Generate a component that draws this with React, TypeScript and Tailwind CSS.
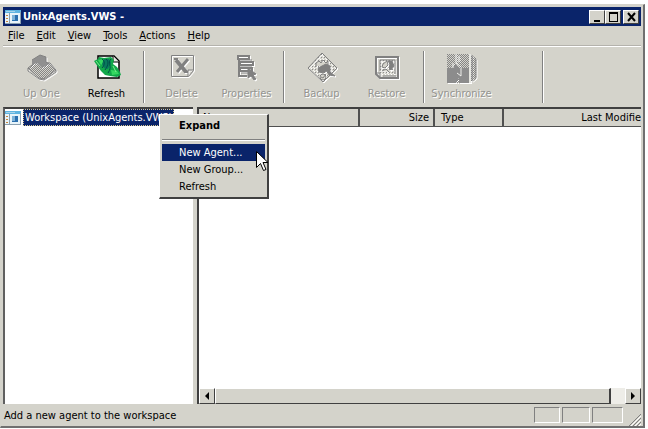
import React from "react";
import clsx from "clsx";

interface ToolButtonProps {
  label: string;
  disabled?: boolean;
  children: React.ReactNode;
}

const menus = ["File", "Edit", "View", "Tools", "Actions", "Help"];

const raised =
  "border border-t-white border-l-white border-r-[#404040] border-b-[#404040] bg-[#d4d3cb]";

const sunken = "border border-t-[#808080] border-r-white border-b-white border-l-[#808080]";

const headerCell = "border-b border-[#505050] pt-px font-normal";

const AppIcon: React.FC = () => (
  <svg className="h-4 w-4 shrink-0" viewBox="0 0 16 16" shapeRendering="crispEdges" aria-hidden="true">
    <path fill="#e8f4fa" d="M0 1h16v14H0z" />
    <path fill="#5fb4e0" d="M0 1h16v3H0z" />
    <path fill="#a9d4ea" d="M1 2h9v1H1z" />
    <path fill="#8aa0b0" d="M4 4h1v11H4zM0 14h16v1H0zM15 3h1v12h-1z" />
    <path fill="#c9873c" d="M1 6h2v1H1zM1 9h2v1H1zM1 12h2v1H1z" />
    <path fill="#2a6fae" d="M7 6h6v6H7z" />
    <path fill="#7fb3d8" d="M7 6h3v5H7z" />
  </svg>
);

const ToolIcon: React.FC<{ children: React.ReactNode }> = ({ children }) => (
  <svg
    className="h-8 w-8 drop-shadow-[1px_1px_0_#ffffff]"
    viewBox="0 0 32 32"
    fill="none"
    stroke="#808080"
    aria-hidden="true"
  >
    {children}
  </svg>
);

const UpOneIcon: React.FC = () => (
  <ToolIcon>
    <path fill="url(#dither)" d="M2 17 10 11 24 12 30 19 18 28 13 27z" />
    <path d="M2 17v3l11 8 5 1 12-8v-2" />
    <path fill="#909090" stroke="none" d="M6 9 14 4 20 6 20 11 23 13 16 17 11 12 6 14z" />
    <path d="M6 9 14 4l6 2v5l3 2" />
  </ToolIcon>
);

const RefreshIcon: React.FC = () => (
  <svg className="h-8 w-8" viewBox="0 0 32 32" aria-hidden="true">
    <path fill="#ffffff" stroke="#000000" strokeWidth="1.500" d="M7 5h16l5 5v17H7z" />
    <path fill="#e8e8e2" stroke="#000000" d="M22 5v6h6" />
    <path fill="#12a84a" d="M3 10 7 8 8 6l5 1 7-1 3 3-1 4 4 3 3 5 1 3-4 2-7-1-5-1-4-4-3-4-2-3z" />
    <path fill="#35d860" d="m7 9 5-1 1 3-3 3zM20 19l6 1 2 3-7 1z" />
    <path fill="#087a5c" d="m13 8 5 0 2 4-3 6-4-1-2-4z" />
    <path stroke="#004c48" fill="none" d="M11 8c3 2 3 6 0 9M20 8c-4 4 2 7-3 14M15 8c4 3 1 8-1 11" />
    <path stroke="#7cf08c" fill="none" d="m5 10 4 5M22 15l3 6" />
  </svg>
);

const DeleteIcon: React.FC = () => (
  <ToolIcon>
    <path d="M5.500 4.500h22v15l-5 6h-17z" />
    <path d="M27 19h-5v6" />
    <path strokeWidth="4" d="m10 9 10 12" />
    <path strokeWidth="3" d="M22 8 11 21" />
    <path strokeWidth="2" d="M8 8h4M18 21h4" />
  </ToolIcon>
);

const PropertiesIcon: React.FC = () => (
  <ToolIcon>
    <path strokeWidth="2" d="M7 5h11v3H7zM8 8v17h8M9 11h13v3H9zM9 17h12v3H9z" />
    <path d="M8 9h13M9 16h12M10 22h7" />
    <path fill="#808080" d="m17 17 8 6-3 1 3 4-2 1-3-4-3 2z" />
  </ToolIcon>
);

const BackupIcon: React.FC = () => (
  <ToolIcon>
    <path fill="url(#dither-light)" d="M16 2 31 17 17 31 2 17z" />
    <path fill="#d4d3cb" stroke="none" d="M10 11h12v4H10z" />
    <path d="M10 16v-4l3-2 2 2 2-3 3 3 2-2v6" />
    <path fill="#808080" d="m12 17 8-4 4 2v6l5 4-6-1-2-4-4 2-4-1z" />
    <circle cx="17" cy="26" r="3" fill="#d4d3cb" />
    <path d="m15 26 2 1 3-4" />
  </ToolIcon>
);

const RestoreIcon: React.FC = () => (
  <ToolIcon>
    <path strokeWidth="2" d="M5 6h22v21H9l-4-4z" />
    <path fill="url(#dither-light)" stroke="none" d="M9 9h15v14H9z" />
    <path d="M9 20V9h15v14" />
    <path fill="#808080" d="M17 10h4l2 5-3 4-2-2 1-4z" />
    <path fill="#d4d3cb" d="m12 13 4-3 1 4-3 3-3-1zM11 20l4-2 3 3" />
    <path d="M5 22h4v4M12 25h13" />
  </ToolIcon>
);

const SynchronizeIcon: React.FC = () => (
  <ToolIcon>
    <path fill="url(#dither)" stroke="none" d="M1 3h23l6 4v21l-6 4H1z" />
    <path fill="#8c8c8c" stroke="none" d="M1 17h5l4-4 3 4h10v15H13v-5l-3 5H1z" />
    <path stroke="#e6e6e0" strokeWidth="2" d="M24 3v29" />
    <path stroke="#f0f0ec" d="M10 3v9l4 3M7 12v5M15 17v8l-4-3M13 5v6" />
    <path d="M26 4v26M30 8v19" />
  </ToolIcon>
);

const ToolButton: React.FC<ToolButtonProps> = ({ label, disabled, children }) => (
  <button
    type="button"
    disabled={disabled}
    className={clsx(
      "flex w-[65px] flex-col items-center gap-[3px] whitespace-nowrap",
      disabled ? "text-[#949490] [text-shadow:1px_1px_0_#ffffff]" : "text-black"
    )}
  >
    {children}
    <span>{label}</span>
  </button>
);

const ToolSeparator: React.FC = () => (
  <div className="mx-1 w-[2px] self-stretch border-l border-r border-l-[#808080] border-r-white" />
);

const TitleBar: React.FC = () => (
  <header className="flex h-[19px] items-center bg-[#0a246a] pr-[2px] pl-[2px] text-white">
    <AppIcon />
    <h1 className="ml-[2px] grow font-bold">UnixAgents.VWS -</h1>
    <button type="button" aria-label="Minimize" className={clsx(raised, "h-[14px] w-4")}>
      <svg viewBox="0 0 14 12" shapeRendering="crispEdges">
        <path fill="#000000" d="M4 9h6v2H4z" />
      </svg>
    </button>
    <button type="button" aria-label="Maximize" className={clsx(raised, "h-[14px] w-4")}>
      <svg viewBox="0 0 14 12" shapeRendering="crispEdges">
        <path fill="#000000" d="M3 1h9v10H3zM4 3v7h7V3z" fillRule="evenodd" />
      </svg>
    </button>
    <button type="button" aria-label="Close" className={clsx(raised, "ml-[2px] h-[14px] w-4")}>
      <svg viewBox="0 0 14 12">
        <path stroke="#000000" strokeWidth="2" d="m4 2 7 8M11 2l-7 8" />
      </svg>
    </button>
  </header>
);

const ContextMenu: React.FC = () => (
  <div
    role="menu"
    className={clsx(
      raised,
      "absolute top-[7px] left-[156px] z-10 w-[110px] border-r-2 border-b-2 p-[2px]"
    )}
  >
    <button type="button" role="menuitem" className="block h-[18px] w-full pl-[17px] text-left font-bold">
      Expand
    </button>
    <div className="mt-1 mb-[3px] h-[2px] border-t border-b border-t-[#808080] border-b-white" />
    <button
      type="button"
      role="menuitem"
      className="block h-[17px] w-full bg-[#0a246a] pl-[17px] text-left text-white"
    >
      New Agent...
    </button>
    <button type="button" role="menuitem" className="block h-[17px] w-full pl-[17px] text-left">
      New Group...
    </button>
    <button type="button" role="menuitem" className="block h-[17px] w-full pl-[17px] text-left">
      Refresh
    </button>
    <svg className="absolute top-[36px] left-[96px] h-[21px] w-3" viewBox="0 0 12 21" aria-hidden="true">
      <path fill="#ffffff" stroke="#000000" d="M.5.5v16l4-4 3 7 2.500-1-3-7h5z" />
    </svg>
  </div>
);

const FileList: React.FC = () => (
  <section className="flex min-w-0 grow flex-col overflow-hidden border-t-2 border-l-2 border-[#404040] bg-white">
    <div className="grow overflow-hidden">
      <table className="w-full table-fixed border-collapse">
        <thead>
          <tr className="h-[17px] bg-[#d4d3cb] whitespace-nowrap">
            <th className={clsx(headerCell, "w-[160px] border-r-2 px-1 text-left")}>Name</th>
            <th className={clsx(headerCell, "w-[75px] border-r-2 px-1 text-right")}>Size</th>
            <th className={clsx(headerCell, "w-[69px] border-r-2 px-[6px] text-left")}>Type</th>
            <th className={clsx(headerCell, "text-right")}>Last Modifie</th>
          </tr>
        </thead>
        <tbody />
      </table>
    </div>
    <div className="flex h-4 bg-[#eeede8]">
      <button type="button" aria-label="Scroll left" className={clsx(raised, "w-4")}>
        <svg viewBox="0 0 14 14">
          <path d="M9 3v8L5 7z" />
        </svg>
      </button>
      <div className={clsx(raised, "grow border-r-2")} />
      <div className="w-[14px]" />
      <button type="button" aria-label="Scroll right" className={clsx(raised, "w-4")}>
        <svg viewBox="0 0 14 14">
          <path d="M5 3v8l4-4z" />
        </svg>
      </button>
    </div>
  </section>
);

const StatusBar: React.FC = () => (
  <footer className="flex h-[22px] items-center gap-[2px]">
    <p className="grow pt-[2px] pl-px">Add a new agent to the workspace</p>
    <div className={clsx(sunken, "h-4 w-[26px]")} />
    <div className={clsx(sunken, "h-4 w-[28px]")} />
    <div className={clsx(sunken, "h-4 w-[31px]")} />
    <svg className="ml-1 h-3 w-3 self-end" viewBox="0 0 12 12" stroke="#808080" aria-hidden="true">
      <path d="M0 12 12 0M4 12l8-8M8 12l4-4" />
      <path stroke="#ffffff" d="M2 12 12 2M6 12l6-6M10 12l2-2" />
    </svg>
  </footer>
);

const App: React.FC = () => {
  return (
    <div className="h-screen bg-white pt-1 pr-[3px] pb-px font-['DejaVu_Sans_Condensed','DejaVu_Sans',sans-serif] text-[11px] leading-4 text-black">
      <svg className="absolute h-0 w-0" aria-hidden="true">
        <defs>
          <pattern id="dither" width="2" height="2" patternUnits="userSpaceOnUse">
            <path fill="#858585" d="M0 0h1v1H0zM1 1h1v1H1z" />
          </pattern>
          <pattern id="dither-light" width="3" height="3" patternUnits="userSpaceOnUse">
            <path fill="#8c8c8c" d="M0 0h1v1H0z" />
            <path fill="#f4f4f0" d="M1 1h1v1H1z" />
          </pattern>
        </defs>
      </svg>
      <div className="flex h-full flex-col border-t border-r-2 border-b-2 border-l border-t-[#d4d3cb] border-r-[#707070] border-b-[#707070] border-l-[#d4d3cb] bg-[#d4d3cb] pt-[2px] pr-[2px] pl-[2px]">
        <TitleBar />
        <nav className="flex h-[20px] items-center gap-3 border-b border-[#b4b2ac] pl-[5px]">
          {menus.map((name) => (
            <button type="button" key={name}>
              <span className="underline">{name[0]}</span>
              {name.slice(1)}
            </button>
          ))}
        </nav>
        <div className="flex h-[61px] border-t border-white pt-1 pb-1 pl-[6px]">
          <ToolButton label="Up One" disabled>
            <UpOneIcon />
          </ToolButton>
          <ToolButton label="Refresh">
            <RefreshIcon />
          </ToolButton>
          <ToolSeparator />
          <ToolButton label="Delete" disabled>
            <DeleteIcon />
          </ToolButton>
          <ToolButton label="Properties" disabled>
            <PropertiesIcon />
          </ToolButton>
          <ToolSeparator />
          <ToolButton label="Backup" disabled>
            <BackupIcon />
          </ToolButton>
          <ToolButton label="Restore" disabled>
            <RestoreIcon />
          </ToolButton>
          <ToolSeparator />
          <ToolButton label="Synchronize" disabled>
            <SynchronizeIcon />
          </ToolButton>
          <div className="w-11" />
          <ToolSeparator />
        </div>
        <main className="relative flex min-h-0 grow gap-1">
          <section className="w-[190px] shrink-0 border-t-2 border-l-2 border-t-[#404040] border-l-[#606060] bg-white">
            <div className="flex items-center gap-[2px]">
              <AppIcon />
              <span className="border border-dotted border-[#d8c890] bg-[#0a246a] px-px leading-[15px] whitespace-nowrap text-white">
                Workspace (UnixAgents.VWS)
              </span>
            </div>
          </section>
          <FileList />
          <ContextMenu />
        </main>
        <StatusBar />
      </div>
    </div>
  );
};

export default App;
